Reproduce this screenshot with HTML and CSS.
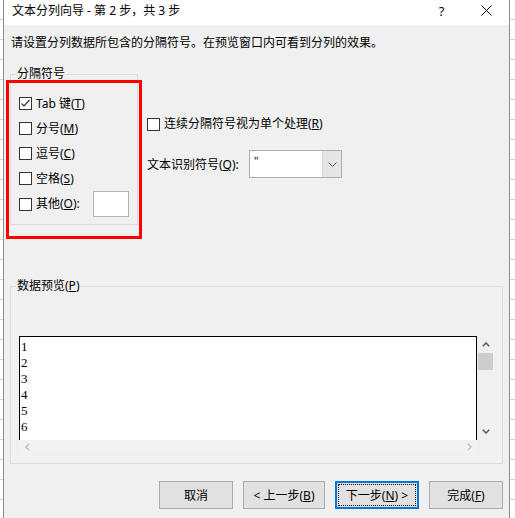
FILE: index.html
```html
<!DOCTYPE html>
<html lang="zh-CN">

<head>
    <meta charset="UTF-8">
    <meta name="viewport" content="width=device-width, initial-scale=1.0">
    <title>文本分列向导</title>
    <link rel="stylesheet" href="styles.css">
</head>

<body>
    <div class="screen">
        <div class="sheet sheet-left"></div>

        <div class="dialog">
            <div class="titlebar">
                <span class="title">文本分列向导 - 第 2 步，共 3 步</span>
                <span class="title-btn">?</span>
                <span class="title-btn">
                    <svg width="11" height="11" viewBox="0 0 11 11">
                        <path d="M0.5 0.5 L10.5 10.5 M10.5 0.5 L0.5 10.5" stroke="#000" stroke-width="1" fill="none" />
                    </svg>
                </span>
            </div>

            <div class="dialog-body">
                <p class="intro">请设置分列数据所包含的分隔符号。在预览窗口内可看到分列的效果。</p>

                <div class="options">
                    <fieldset class="group delimiters">
                        <legend>分隔符号</legend>
                        <label class="check-row">
                            <span class="check">
                                <svg width="11" height="11" viewBox="0 0 11 11">
                                    <polyline points="1.5,5.5 4,8 9.5,2" stroke="#333" stroke-width="1.2" fill="none" />
                                </svg>
                            </span>
                            <span>Tab 键(<u>T</u>)</span>
                        </label>
                        <label class="check-row"><span class="check"></span><span>分号(<u>M</u>)</span></label>
                        <label class="check-row"><span class="check"></span><span>逗号(<u>C</u>)</span></label>
                        <label class="check-row"><span class="check"></span><span>空格(<u>S</u>)</span></label>
                        <label class="check-row last-row">
                            <span class="check"></span><span>其他(<u>O</u>):</span>
                            <span class="other-input"></span>
                        </label>
                    </fieldset>

                    <div class="side">
                        <label class="check-row side-check"><span class="check"></span><span>连续分隔符号视为单个处理(<u>R</u>)</span></label>
                        <div class="qualifier">
                            <span class="qualifier-label">文本识别符号(<u>Q</u>):</span>
                            <div class="combo">
                                <span class="combo-value">"</span>
                                <span class="combo-arrow">
                                    <svg width="9" height="5" viewBox="0 0 9 5">
                                        <polyline points="0.5,0.5 4.5,4.5 8.5,0.5" stroke="#555" stroke-width="1" fill="none" />
                                    </svg>
                                </span>
                            </div>
                        </div>
                    </div>

                    <!-- red mark drawn over the delimiter group -->
                    <div class="mark"></div>
                </div>

                <fieldset class="group preview-group">
                    <legend>数据预览(<u>P</u>)</legend>
                    <div class="preview">
                        <div class="preview-text">1<br>2<br>3<br>4<br>5<br>6</div>
                        <div class="vscroll">
                            <span class="arrow">
                                <svg width="8" height="5" viewBox="0 0 8 5">
                                    <polyline points="0.8,4.2 4,1 7.2,4.2" stroke="#606060" stroke-width="1.6" fill="none" />
                                </svg>
                            </span>
                            <span class="thumb"></span>
                            <span class="spacer"></span>
                            <span class="arrow">
                                <svg width="8" height="5" viewBox="0 0 8 5">
                                    <polyline points="0.8,0.8 4,4 7.2,0.8" stroke="#606060" stroke-width="1.6" fill="none" />
                                </svg>
                            </span>
                        </div>
                        <div class="hscroll">
                            <svg width="5" height="8" viewBox="0 0 5 8">
                                <polyline points="4.2,0.8 1,4 4.2,7.2" stroke="#c6c6c6" stroke-width="1.6" fill="none" />
                            </svg>
                            <svg width="5" height="8" viewBox="0 0 5 8">
                                <polyline points="0.8,0.8 4,4 0.8,7.2" stroke="#c6c6c6" stroke-width="1.6" fill="none" />
                            </svg>
                        </div>
                    </div>
                </fieldset>

                <div class="buttons">
                    <button class="btn btn-cancel">取消</button>
                    <button class="btn btn-prev">&lt; 上一步(<u>B</u>)</button>
                    <button class="btn btn-next default">下一步(<u>N</u>) &gt;</button>
                    <button class="btn btn-finish">完成(<u>F</u>)</button>
                </div>
            </div>
        </div>

        <div class="sheet sheet-right"></div>
    </div>
</body>
</html>
```

FILE: styles.css
```css
body {
    margin: 0;
    width: 515px;
    height: 518px;
    overflow: hidden;
    font-family: "Noto Sans", "Noto Sans CJK SC", sans-serif;
    font-size: 12px;
    color: #000;
    background: #fff;
}

.screen {
    display: flex;
    height: 518px;
}

.sheet {
    background: repeating-linear-gradient(to bottom, #fff 0, #fff 19px, #d6d6d6 19px, #d6d6d6 20px);
}

.sheet-left {
    width: 3px;
}

.sheet-right {
    flex: 1;
}

.dialog {
    width: 507px;
    box-sizing: border-box;
    border-left: 1px solid #8c8c8c;
    border-right: 1px solid #8c8c8c;
    box-shadow: 1px 0 0 #b0b0b0;
    background: #f0f0f0;
    display: flex;
    flex-direction: column;
}

/* title bar */

.titlebar {
    height: 25px;
    box-sizing: border-box;
    padding-bottom: 4px;
    background: #fff;
    display: flex;
    align-items: center;
}

.title {
    flex: 1;
    padding-left: 8px;
    line-height: 16px;
}

.title-btn {
    width: 45px;
    display: flex;
    justify-content: center;
    align-items: center;
    font-size: 13px;
    line-height: 16px;
}

/* body */

.dialog-body {
    padding: 10px 6px 0 6px;
}

.intro {
    margin: 0;
    padding-left: 1px;
    line-height: 16px;
}

.options {
    position: relative;
    display: flex;
    align-items: flex-start;
    gap: 9px;
    margin-top: 17px;
}

.group {
    margin: 0;
    min-width: 0;
    border: 1px solid #dcdcdc;
}

.group legend {
    padding: 0 1px;
    margin-left: -3px;
    line-height: 12px;
}

.delimiters {
    width: 128px;
    box-sizing: border-box;
    padding: 11px 8px 7px 8px;
}

.check-row {
    display: flex;
    align-items: center;
    gap: 4px;
    height: 25px;
    line-height: 16px;
    white-space: nowrap;
}

.last-row {
    height: 26px;
}

.check {
    width: 13px;
    height: 13px;
    box-sizing: border-box;
    border: 1px solid #333;
    background: #fff;
    display: flex;
    justify-content: center;
    align-items: center;
    flex-shrink: 0;
}

.other-input {
    width: 36px;
    height: 26px;
    box-sizing: border-box;
    margin-left: auto;
    border: 1px solid #b4b4b4;
    background: #fff;
}

.side {
    padding-top: 46px;
    display: flex;
    flex-direction: column;
    gap: 16px;
}

.side-check {
    height: 20px;
}

.qualifier {
    display: flex;
    align-items: center;
    height: 28px;
}

.qualifier-label {
    width: 102px;
    white-space: nowrap;
}

.combo {
    width: 93px;
    height: 28px;
    box-sizing: border-box;
    border: 1px solid #adadad;
    background: #fff;
    display: flex;
}

.combo-value {
    flex: 1;
    padding: 4px 0 0 4px;
    font-size: 11px;
    line-height: 12px;
}

.combo-arrow {
    width: 18px;
    background: #e5e5e5;
    border-left: 1px solid #dadada;
    display: flex;
    justify-content: center;
    align-items: center;
}

.mark {
    position: absolute;
    left: -4px;
    top: 12px;
    width: 136px;
    height: 159px;
    box-sizing: border-box;
    border: 3px solid #ff0000;
    pointer-events: none;
}

/* data preview */

.preview-group {
    margin-top: 55px;
    padding: 44px 8px 10px 8px;
}

.preview {
    display: grid;
    grid-template-columns: 458px 17px;
    grid-template-rows: 104px 13px;
}

.preview-text {
    background: #fff;
    border: 1px solid #000;
    border-bottom: none;
    padding: 2px 0 0 1px;
    font-family: "Liberation Serif", serif;
    font-size: 13px;
    line-height: 16px;
    overflow: hidden;
}

.vscroll {
    display: flex;
    flex-direction: column;
    align-items: center;
}

.vscroll .arrow {
    height: 17px;
    display: flex;
    align-items: center;
}

.vscroll .thumb {
    width: 15px;
    height: 17px;
    background: #cdcdcd;
}

.vscroll .spacer {
    flex: 1;
}

.hscroll {
    background: #f2f2f2;
    display: flex;
    justify-content: space-between;
    align-items: center;
    padding: 0 5px 0 6px;
}

/* buttons */

.buttons {
    display: flex;
    justify-content: flex-end;
    gap: 10px;
    margin-top: 17px;
}

.btn {
    position: relative;
    height: 28px;
    box-sizing: border-box;
    border: 1px solid #adadad;
    background: #e1e1e1;
    font-family: inherit;
    font-size: 12px;
    color: #000;
    padding: 0;
}

.btn-cancel,
.btn-finish {
    width: 74px;
}

.btn-prev {
    width: 82px;
}

.btn-next {
    width: 84px;
}

.btn.default {
    border: 2px solid #0078d7;
}

.btn.default::after {
    content: "";
    position: absolute;
    inset: 1px;
    border: 1px dotted #000;
}
```
